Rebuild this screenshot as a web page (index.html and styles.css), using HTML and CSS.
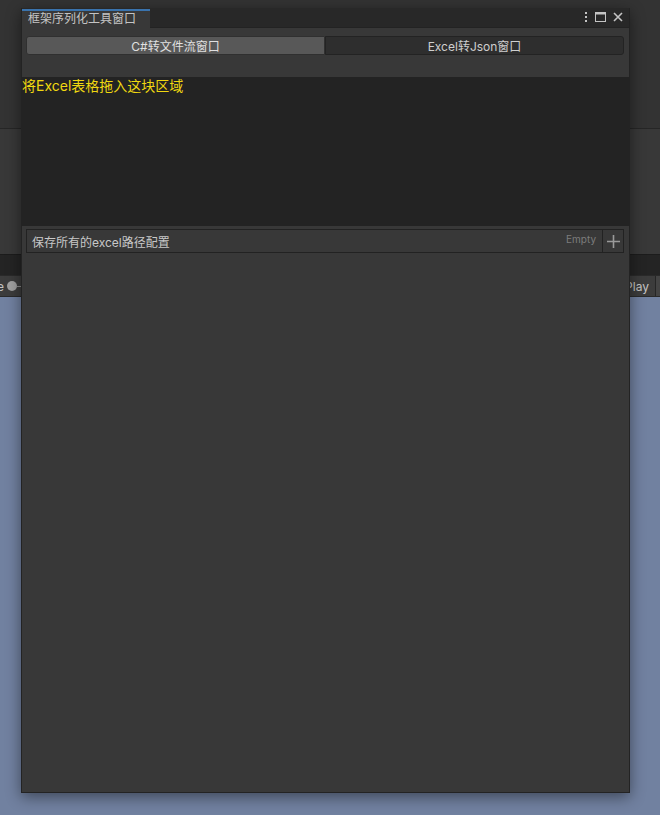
FILE: index.html
```html
<!DOCTYPE html>
<html>
<head>
<meta charset="utf-8">
<link rel="stylesheet" href="styles.css">
</head>
<body>
<div class="editor">
  <div class="pane-top"></div>
  <div class="pane-mid"></div>
  <div class="strip"></div>
  <div class="toolbar">
    <span class="tb-left">e <span class="dot"></span><span class="dash"></span></span>
    <span class="tb-right"><span class="play">Play</span><span class="tb-btn"></span></span>
  </div>
  <div class="scene"></div>
</div>

<div class="window">
  <div class="tabbar">
    <div class="tab">框架序列化工具窗口</div>
    <div class="win-icons">
      <svg width="4" height="12" viewBox="0 0 4 12"><rect x="1" y="1" width="2" height="2" fill="#c4c4c4"/><rect x="1" y="5" width="2" height="2" fill="#c4c4c4"/><rect x="1" y="9" width="2" height="2" fill="#c4c4c4"/></svg>
      <svg width="11" height="10" viewBox="0 0 11 10"><rect x="0.5" y="0.5" width="10" height="9" fill="none" stroke="#c4c4c4"/><rect x="0.5" y="0.5" width="10" height="2" fill="#c4c4c4"/></svg>
      <svg width="10" height="10" viewBox="0 0 10 10"><path d="M1 1 L9 9 M9 1 L1 9" stroke="#c4c4c4" stroke-width="1.6"/></svg>
    </div>
  </div>
  <div class="content">
    <div class="seg">
      <div class="seg-btn active">C#转文件流窗口</div>
      <div class="seg-btn">Excel转Json窗口</div>
    </div>
    <div class="drop">将Excel表格拖入这块区域</div>
    <div class="list-head">
      <span class="lh-title">保存所有的excel路径配置</span>
      <span class="lh-empty">Empty</span>
      <span class="lh-plus">
        <svg width="13" height="13" viewBox="0 0 13 13"><path d="M6.5 0 V13 M0 6.5 H13" stroke="#9a9a9a" stroke-width="1.6"/></svg>
      </span>
    </div>
  </div>
</div>
</body>
</html>
```

FILE: styles.css
```css
* { box-sizing: border-box; }
html, body { margin: 0; padding: 0; }
body {
  width: 660px;
  height: 815px;
  overflow: hidden;
  background: #7181a0;
  font-family: "Inter", "Noto Sans CJK SC", sans-serif;
  position: relative;
}
.editor { display: flex; flex-direction: column; height: 815px; }
.pane-top { height: 129px; background: #333333; border-bottom: 1px solid #262626; }
.pane-mid { height: 125px; background: #383838; }
.strip { height: 21px; background: #242424; border-top: 1px solid #1c1c1c; }
.toolbar {
  height: 22px;
  background: #3c3c3c;
  border-top: 1px solid #2a2a2a;
  border-bottom: 1px solid #2a2a2a;
  display: flex;
  justify-content: space-between;
  align-items: center;
  color: #c4c4c4;
  font-size: 12px;
}
.tb-left { display: flex; align-items: center; gap: 3px; margin-left: -3px; }
.dot { width: 10px; height: 10px; border-radius: 50%; background: #a0a0a0; display: inline-block; }
.dash { width: 4px; height: 1px; background: #8a8a8a; margin-left: -3px; }
.tb-right { display: flex; align-items: center; height: 100%; }
.play { padding-right: 6px; }
.tb-btn { width: 5px; height: 100%; border-left: 1px solid #262626; background: #444; }
.scene { flex: 1; background: #7181a0; }

.window {
  position: absolute;
  left: 21px;
  top: 8px;
  width: 609px;
  height: 785px;
  background: #383838;
  border: 1px solid #232323;
  border-top: none;
  box-shadow: 0 4px 14px rgba(0,0,0,0.45);
  display: flex;
  flex-direction: column;
}
.tabbar {
  height: 20px;
  background: #282828;
  display: flex;
  align-items: flex-end;
  justify-content: space-between;
  border-bottom: 1px solid #232323;
}
.tab {
  height: 19px;
  width: 128px;
  background: #383838;
  border-top: 2px solid #3a73ad;
  color: #c4c4c4;
  font-size: 12px;
  line-height: 16px;
  padding-left: 6px;
  margin-bottom: -1px;
}
.win-icons {
  display: flex;
  align-items: center;
  gap: 7px;
  height: 20px;
  padding-right: 6px;
}
.content { flex: 1; display: flex; flex-direction: column; }
.seg {
  display: flex;
  margin: 8px 5px 0 4px;
  height: 19px;
}
.seg-btn {
  flex: 1;
  font-size: 12px;
  color: #cfcfcf;
  display: flex;
  align-items: center;
  justify-content: center;
  background: #2e2e2e;
  border: 1px solid #232323;
  border-radius: 0 3px 3px 0;
}
.seg-btn.active {
  background: #585858;
  border-color: #303030;
  border-radius: 3px 0 0 3px;
  color: #e0e0e0;
}
.drop {
  margin-top: 22px;
  height: 149px;
  background: #232323;
  color: #f0d810;
  font-size: 14px;
  line-height: 18px;
  padding-top: 0;
}
.list-head {
  margin: 3px 5px 0 4px;
  height: 24px;
  background: #383838;
  border: 1px solid #222222;
  display: flex;
  align-items: center;
  font-size: 12px;
  color: #c8c8c8;
}
.lh-title { padding-left: 5px; flex: 1; }
.lh-empty { font-size: 10px; color: #7c7c7c; padding-right: 6px; margin-top: -4px; }
.lh-plus {
  width: 21px;
  height: 100%;
  border-left: 1px solid #222222;
  display: flex;
  align-items: center;
  justify-content: center;
}
```
